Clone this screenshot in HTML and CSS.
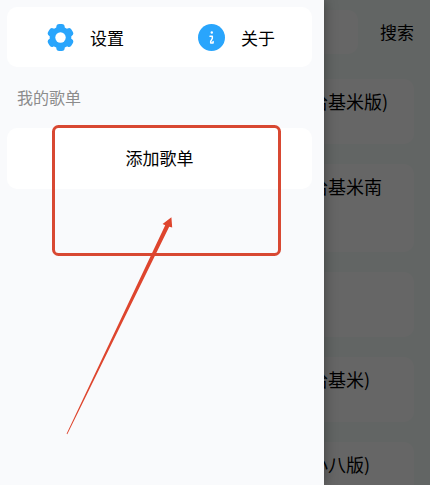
FILE: index.html
```html
<!DOCTYPE html>
<html lang="zh-CN">

<head>
  <meta charset="UTF-8">
  <meta name="viewport" content="width=device-width, initial-scale=1.0">
  <title>我的歌单</title>
  <link rel="stylesheet" href="styles.css">
</head>

<body>

  <main class="page">
    <form class="search-bar">
      <input class="search-input" type="text" aria-label="搜索">
      <button class="search-button" type="button">搜索</button>
    </form>
    <ul class="song-list">
      <li class="song">哈基米版)</li>
      <li class="song song-long">哈基米南</li>
      <li class="song"></li>
      <li class="song">哈基米)</li>
      <li class="song">小八版)</li>
    </ul>
  </main>

  <div class="mask"></div>

  <aside class="drawer">
    <nav class="card menu">
      <button class="menu-item" type="button">
        <svg class="icon" viewBox="0 0 27 27" aria-hidden="true">
          <g fill="#29a5fc">
            <circle cx="13.5" cy="13.5" r="10.8" />
            <rect x="9.3" y="0" width="8.4" height="27" rx="3" />
            <rect x="9.3" y="0" width="8.4" height="27" rx="3" transform="rotate(60 13.5 13.5)" />
            <rect x="9.3" y="0" width="8.4" height="27" rx="3" transform="rotate(120 13.5 13.5)" />
          </g>
          <circle cx="13.5" cy="13.5" r="5.2" fill="#fff" />
        </svg>
        设置
      </button>
      <button class="menu-item" type="button">
        <svg class="icon" viewBox="0 0 27 27" aria-hidden="true">
          <circle cx="13.5" cy="13.5" r="13.5" fill="#29a5fc" />
          <circle cx="13.8" cy="8.5" r="1.2" fill="#fff" />
          <path d="M12 12.3h2.3v2.2l-1.6 2.8v1.6h2.4v-1.4" fill="none" stroke="#fff" stroke-width="1.5" stroke-linecap="round" stroke-linejoin="round" />
        </svg>
        关于
      </button>
    </nav>
    <h2 class="drawer-title">我的歌单</h2>
    <button class="card add-button" type="button">添加歌单</button>
  </aside>

  <!-- callout around the add button -->
  <svg class="callout" width="324" height="485" viewBox="0 0 324 485" aria-hidden="true">
    <rect x="53.5" y="126.5" width="226" height="128" rx="5" fill="none" stroke="#d84832" stroke-width="3" />
    <path d="M66.6 433.8L165.2 225.2L162.6 224L171.4 217.2L172.2 227.6L169.2 226.8L67.3 434.2z" fill="#de452e" />
  </svg>

</body>

</html>
```

FILE: styles.css
```css
:root {
  --drawer-width: 324px;
}

* {
  box-sizing: border-box;
}

body {
  margin: 0;
  height: 100vh;
  overflow: hidden;
  position: relative;
  background-color: #f6fcfa;
  color: #000;
  font-family: "Noto Sans CJK SC", sans-serif;
  font-size: 17px;
}

button {
  padding: 0;
  border: 0;
  background-color: transparent;
  color: inherit;
  font: inherit;
  cursor: pointer;
}

/* Song page */
.page {
  height: 100%;
  padding: 10px 16px 0;
  overflow: hidden;
}

.search-bar {
  display: flex;
  align-items: center;
  gap: 22px;
  margin-bottom: 25px;
}

.search-input {
  flex: 1;
  min-width: 0;
  height: 44px;
  border: 0;
  border-radius: 10px;
  background-color: #fff;
}

.search-button {
  padding-bottom: 2px;
}

.song-list {
  display: flex;
  flex-direction: column;
  gap: 20px;
  margin: 0;
  padding: 0;
  list-style: none;
}

.song {
  min-height: 65px;
  padding: 10px 16px 10px calc(var(--drawer-width) - 30px);
  border-radius: 10px;
  background-color: #fff;
  font-size: 18px;
  line-height: 24px;
  white-space: nowrap;
}

.song-long {
  min-height: 88px;
}

.mask {
  position: absolute;
  inset: 0;
  background-color: rgba(0, 0, 0, 0.6);
}

/* Side drawer */
.drawer {
  position: absolute;
  top: 0;
  bottom: 0;
  left: 0;
  width: var(--drawer-width);
  padding: 7px 12px 7px 7px;
  background-color: #f9fafc;
  box-shadow: 0 0 12px rgba(0, 0, 0, 0.4);
}

.card {
  width: 100%;
  height: 61px;
  border-radius: 10px;
  background-color: #fff;
}

.menu {
  display: grid;
  grid-template-columns: 1fr 1fr;
  height: 60px;
  padding-left: 3px;
}

.menu-item {
  display: flex;
  align-items: center;
  justify-content: center;
  gap: 16px;
}

.icon {
  width: 27px;
  height: 27px;
}

.drawer-title {
  margin: 18px 10px;
  color: #8c8c8c;
  font-size: 16px;
  font-weight: 400;
  line-height: 25px;
}

.add-button {
  padding-bottom: 2px;
}

.callout {
  position: absolute;
  top: 0;
  left: 0;
  pointer-events: none;
}
```
